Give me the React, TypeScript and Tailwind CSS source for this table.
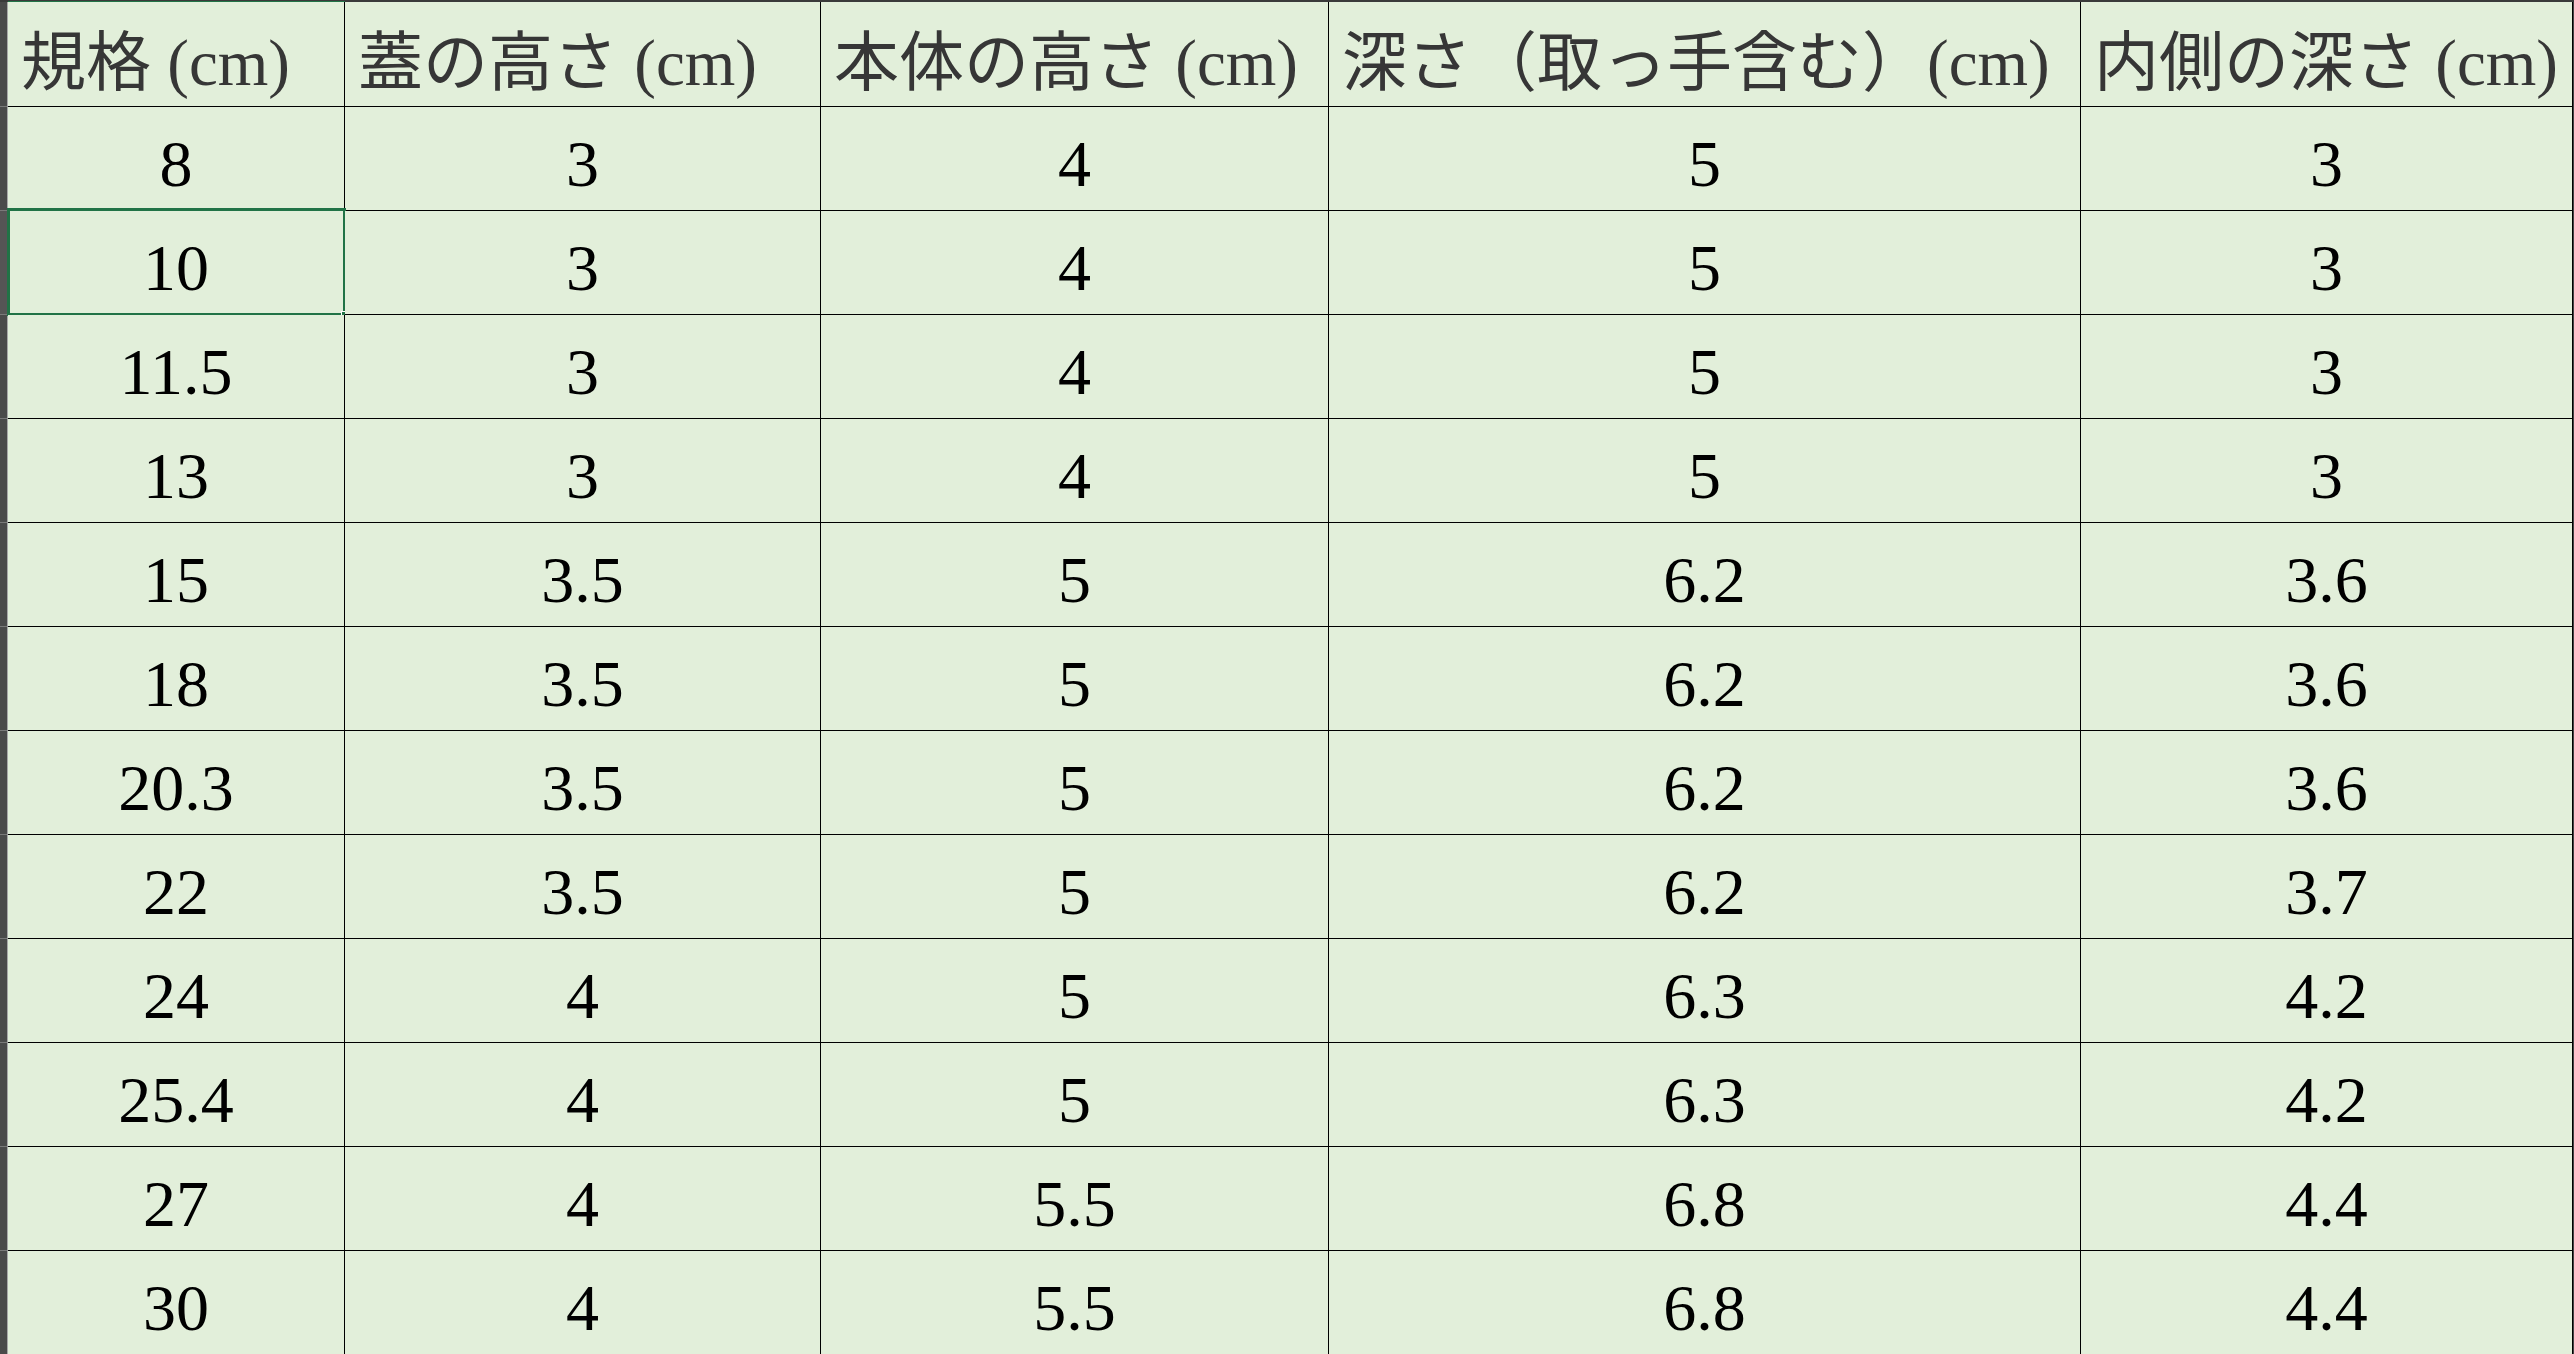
import React from 'react';

const headers = ['規格 (cm)', '蓋の高さ (cm)', '本体の高さ (cm)', '深さ（取っ手含む）(cm)', '内側の深さ (cm)'];

// column widths include the 1px right grid line
const colWidths = ['w-[337px]', 'w-[476px]', 'w-[508px]', 'w-[752px]', 'w-[492px]'];

const rows = [
  ['8', '3', '4', '5', '3'],
  ['10', '3', '4', '5', '3'],
  ['11.5', '3', '4', '5', '3'],
  ['13', '3', '4', '5', '3'],
  ['15', '3.5', '5', '6.2', '3.6'],
  ['18', '3.5', '5', '6.2', '3.6'],
  ['20.3', '3.5', '5', '6.2', '3.6'],
  ['22', '3.5', '5', '6.2', '3.7'],
  ['24', '4', '5', '6.3', '4.2'],
  ['25.4', '4', '5', '6.3', '4.2'],
  ['27', '4', '5.5', '6.8', '4.4'],
  ['30', '4', '5.5', '6.8', '4.4']
];

const font = { fontFamily: '"Liberation Serif", "Noto Sans CJK JP", serif' };

const App: React.FC = () => {
  return (
    <div className="w-[2574px] h-[1354px] overflow-hidden bg-[#444444]" style={font}>
      {/* top edge: column header strip, col A marked as selected */}
      <div className="flex h-[2px]">
        <div className="w-[8px] bg-[#3a3a3a]" />
        <div className="w-[337px] border-t border-[#3a3a3a] bg-[#217346]" />
        <div className="flex-1 bg-[#3a3a3a]" />
      </div>

      {/* header row */}
      <div className="flex h-[105px]">
        <div className="w-[8px] shrink-0 bg-[#4a4a4a] border-r border-[#a8a8a8] border-b border-b-[#7a7a7a]" />
        {headers.map((h, i) => (
          <div
            key={h}
            className={`${colWidths[i]} shrink-0 bg-[#e2efda] border-r border-b border-black flex items-end pl-[13px] pb-[10px] overflow-hidden`}
          >
            <span className="text-[65px] leading-[66px] text-[#363636] whitespace-nowrap">{h}</span>
          </div>
        ))}
      </div>

      {/* data rows */}
      {rows.map((row, r) => (
        <div key={r} className="flex h-[104px]">
          <div
            className={`w-[8px] shrink-0 border-r border-[#a8a8a8] border-b border-b-[#7a7a7a] ${
              r === 1 ? 'bg-[#555555]' : 'bg-[#4a4a4a]'
            }`}
          />
          {row.map((val, c) => (
            <div
              key={c}
              className={`${colWidths[c]} shrink-0 relative bg-[#e2efda] border-r border-b border-black flex items-end justify-center pb-[13px]`}
            >
              <span className="text-[66px] leading-[66px] text-black">{val}</span>
              {r === 1 && c === 0 && (
                <div className="absolute -top-[3px] -left-[1px] w-[339px] h-[108px] border-[3px] border-[#217346]">
                  <div className="absolute -right-[5px] -bottom-[5px] w-[7px] h-[7px] bg-[#217346] border border-white" />
                </div>
              )}
            </div>
          ))}
        </div>
      ))}
    </div>
  );
};

export default App;
